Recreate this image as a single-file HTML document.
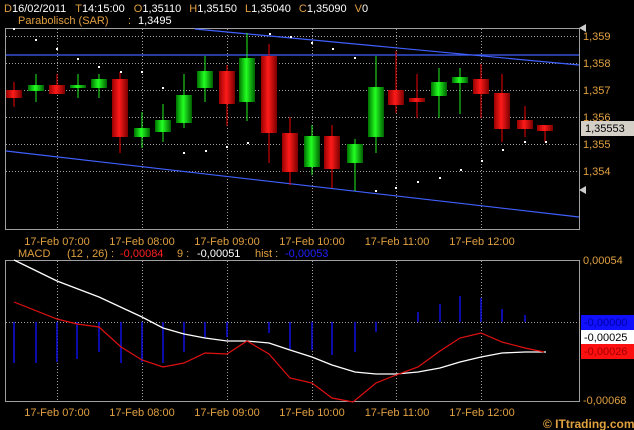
<!DOCTYPE html>
<html><head><style>
html,body{margin:0;padding:0;background:#000;width:634px;height:430px;overflow:hidden}
svg{display:block}
text{font-family:"Liberation Sans",sans-serif;font-size:11px}
.o{fill:#e0a040}.w{fill:#fff}
</style></head><body>
<svg width="634" height="430" viewBox="0 0 634 430" xmlns="http://www.w3.org/2000/svg">
<defs>
<linearGradient id="r" x1="0" x2="1" y1="0" y2="0"><stop offset="0" stop-color="#900"/><stop offset=".45" stop-color="#ff1a1a"/><stop offset="1" stop-color="#7a0000"/></linearGradient>
<linearGradient id="g" x1="0" x2="1" y1="0" y2="0"><stop offset="0" stop-color="#007000"/><stop offset=".45" stop-color="#22ff22"/><stop offset="1" stop-color="#006000"/></linearGradient>
</defs>
<text x="4" y="12"><tspan class="o">D</tspan><tspan class="w">16/02/2011</tspan><tspan class="o" dx="9">T</tspan><tspan class="w">14:15:00</tspan><tspan class="o" dx="9">O</tspan><tspan class="w">1,35110</tspan><tspan class="o" dx="8">H</tspan><tspan class="w">1,35150</tspan><tspan class="o" dx="8">L</tspan><tspan class="w">1,35040</tspan><tspan class="o" dx="8">C</tspan><tspan class="w">1,35090</tspan><tspan class="o" dx="8">V</tspan><tspan class="w">0</tspan></text>
<text x="18" y="24" class="o">Parabolisch (SAR)</text><text x="128" y="24" class="o">:</text><text x="138" y="24" class="w">1,3495</text>
<rect x="5.5" y="28.5" width="574" height="201" fill="none" stroke="#a0a0a0"/>
<g stroke="#a0a0a0" stroke-dasharray="1,2">
<line x1="6" x2="579" y1="36.5" y2="36.5"/><line x1="6" x2="579" y1="63.5" y2="63.5"/><line x1="6" x2="579" y1="90.5" y2="90.5"/><line x1="6" x2="579" y1="117.5" y2="117.5"/><line x1="6" x2="579" y1="144.5" y2="144.5"/><line x1="6" x2="579" y1="171.5" y2="171.5"/>
<line x1="57.5" x2="57.5" y1="29" y2="229"/><line x1="142.5" x2="142.5" y1="29" y2="229"/><line x1="227.5" x2="227.5" y1="29" y2="229"/><line x1="312.5" x2="312.5" y1="29" y2="229"/><line x1="396.5" x2="396.5" y1="29" y2="229"/><line x1="481.5" x2="481.5" y1="29" y2="229"/>
</g>
<g class="o">
<text x="583" y="40">1,359</text><text x="583" y="67">1,358</text><text x="583" y="94">1,357</text><text x="583" y="121">1,356</text><text x="583" y="148">1,355</text><text x="583" y="175">1,354</text>
</g>
<polygon points="579,28 586,24 586,32" fill="#ccc"/><polygon points="579,190 586,186 586,194" fill="#ccc"/>
<rect x="581" y="121" width="53" height="15" fill="#d4d0c8"/><text x="585" y="132" fill="#000">1,35553</text>
<g stroke="#4060ff" stroke-width="1.2">
<line x1="6" y1="55" x2="579" y2="55"/><line x1="195" y1="29" x2="579" y2="65"/><line x1="6" y1="151" x2="579" y2="217"/>
</g>
<g stroke-width="1">
<line x1="14" x2="14" y1="82" y2="107" stroke="#e00"/><rect x="6" y="90" width="16" height="8" fill="url(#r)"/>
<line x1="36" x2="36" y1="74" y2="102" stroke="#2e2"/><rect x="28" y="85" width="16" height="6" fill="url(#g)"/>
<line x1="57" x2="57" y1="74" y2="94" stroke="#e00"/><rect x="49" y="85" width="16" height="9" fill="url(#r)"/>
<line x1="78" x2="78" y1="74" y2="98" stroke="#2e2"/><rect x="70" y="85" width="16" height="3" fill="url(#g)"/>
<line x1="99" x2="99" y1="74" y2="98" stroke="#2e2"/><rect x="91" y="79" width="16" height="9" fill="url(#g)"/>
<line x1="120" x2="120" y1="72" y2="153" stroke="#e00"/><rect x="112" y="79" width="16" height="58" fill="url(#r)"/>
<line x1="142" x2="142" y1="112" y2="148" stroke="#2e2"/><rect x="134" y="128" width="16" height="9" fill="url(#g)"/>
<line x1="163" x2="163" y1="104" y2="142" stroke="#2e2"/><rect x="155" y="120" width="16" height="12" fill="url(#g)"/>
<line x1="184" x2="184" y1="74" y2="128" stroke="#2e2"/><rect x="176" y="95" width="16" height="28" fill="url(#g)"/>
<line x1="205" x2="205" y1="56" y2="102" stroke="#2e2"/><rect x="197" y="71" width="16" height="17" fill="url(#g)"/>
<line x1="227" x2="227" y1="65" y2="126" stroke="#e00"/><rect x="219" y="71" width="16" height="33" fill="url(#r)"/>
<line x1="247" x2="247" y1="33" y2="121" stroke="#2e2"/><rect x="239" y="58" width="16" height="44" fill="url(#g)"/>
<line x1="269" x2="269" y1="44" y2="163" stroke="#e00"/><rect x="261" y="56" width="16" height="77" fill="url(#r)"/>
<line x1="290" x2="290" y1="117" y2="185" stroke="#e00"/><rect x="282" y="133" width="16" height="39" fill="url(#r)"/>
<line x1="312" x2="312" y1="125" y2="175" stroke="#2e2"/><rect x="304" y="136" width="16" height="31" fill="url(#g)"/>
<line x1="332" x2="332" y1="125" y2="188" stroke="#e00"/><rect x="324" y="136" width="16" height="33" fill="url(#r)"/>
<line x1="355" x2="355" y1="139" y2="191" stroke="#2e2"/><rect x="347" y="144" width="16" height="19" fill="url(#g)"/>
<line x1="376" x2="376" y1="56" y2="153" stroke="#2e2"/><rect x="368" y="87" width="16" height="50" fill="url(#g)"/>
<line x1="396" x2="396" y1="51" y2="113" stroke="#e00"/><rect x="388" y="90" width="16" height="15" fill="url(#r)"/>
<line x1="417" x2="417" y1="74" y2="118" stroke="#e00"/><rect x="409" y="98" width="16" height="4" fill="url(#r)"/>
<line x1="439" x2="439" y1="68" y2="118" stroke="#2e2"/><rect x="431" y="82" width="16" height="14" fill="url(#g)"/>
<line x1="460" x2="460" y1="68" y2="114" stroke="#2e2"/><rect x="452" y="77" width="16" height="6" fill="url(#g)"/>
<line x1="481" x2="481" y1="64" y2="118" stroke="#e00"/><rect x="473" y="79" width="16" height="15" fill="url(#r)"/>
<line x1="502" x2="502" y1="74" y2="142" stroke="#e00"/><rect x="494" y="93" width="16" height="36" fill="url(#r)"/>
<line x1="525" x2="525" y1="106" y2="137" stroke="#e00"/><rect x="517" y="120" width="16" height="9" fill="url(#r)"/>
<line x1="545" x2="545" y1="125" y2="142" stroke="#e00"/><rect x="537" y="125" width="16" height="6" fill="url(#r)"/>
</g>
<g fill="#fff">
<rect x="13" y="28" width="2" height="2"/><rect x="35" y="39" width="2" height="2"/><rect x="56" y="48" width="2" height="2"/><rect x="77" y="58" width="2" height="2"/><rect x="98" y="66" width="2" height="2"/><rect x="120" y="71" width="2" height="2"/><rect x="141" y="71" width="2" height="2"/><rect x="162" y="87" width="2" height="2"/><rect x="183" y="152" width="2" height="2"/><rect x="205" y="150" width="2" height="2"/><rect x="226" y="146" width="2" height="2"/><rect x="247" y="142" width="2" height="2"/><rect x="269" y="33" width="2" height="2"/><rect x="290" y="36" width="2" height="2"/><rect x="311" y="42" width="2" height="2"/><rect x="332" y="48" width="2" height="2"/><rect x="354" y="57" width="2" height="2"/><rect x="375" y="190" width="2" height="2"/><rect x="395" y="187" width="2" height="2"/><rect x="417" y="181" width="2" height="2"/><rect x="439" y="177" width="2" height="2"/><rect x="460" y="169" width="2" height="2"/><rect x="481" y="160" width="2" height="2"/><rect x="502" y="149" width="2" height="2"/><rect x="524" y="141" width="2" height="2"/><rect x="545" y="141" width="2" height="2"/>
</g>
<g class="o" text-anchor="middle">
<text x="57" y="245">17-Feb 07:00</text><text x="142" y="245">17-Feb 08:00</text><text x="227" y="245">17-Feb 09:00</text><text x="312" y="245">17-Feb 10:00</text><text x="397" y="245">17-Feb 11:00</text><text x="482" y="245">17-Feb 12:00</text>
<text x="57" y="416">17-Feb 07:00</text><text x="142" y="416">17-Feb 08:00</text><text x="227" y="416">17-Feb 09:00</text><text x="312" y="416">17-Feb 10:00</text><text x="397" y="416">17-Feb 11:00</text><text x="482" y="416">17-Feb 12:00</text>
</g>
<text x="18" y="257" class="o">MACD</text><text x="67" y="257" class="o">(12 , 26) :</text><text x="120" y="257" fill="#ff2020">-0,00084</text><text x="177" y="257" class="o">9 :</text><text x="197" y="257" class="w">-0,00051</text><text x="255" y="257" class="o">hist :</text><text x="285" y="257" fill="#2020ff">-0,00053</text>
<rect x="5.5" y="260.5" width="574" height="141" fill="none" stroke="#a0a0a0"/>
<g stroke="#a0a0a0" stroke-dasharray="1,2">
<line x1="6" x2="579" y1="322.5" y2="322.5"/>
<line x1="57.5" x2="57.5" y1="261" y2="401"/><line x1="142.5" x2="142.5" y1="261" y2="401"/><line x1="227.5" x2="227.5" y1="261" y2="401"/><line x1="312.5" x2="312.5" y1="261" y2="401"/><line x1="396.5" x2="396.5" y1="261" y2="401"/><line x1="481.5" x2="481.5" y1="261" y2="401"/>
</g>
<g stroke="#1010e0" stroke-width="1.5">
<line x1="14" x2="14" y1="322" y2="363"/><line x1="36" x2="36" y1="322" y2="363"/><line x1="57" x2="57" y1="322" y2="362"/><line x1="77" x2="77" y1="322" y2="359"/><line x1="99" x2="99" y1="322" y2="352"/><line x1="121" x2="121" y1="322" y2="363"/><line x1="142" x2="142" y1="322" y2="362"/><line x1="163" x2="163" y1="322" y2="363"/><line x1="184" x2="184" y1="322" y2="352"/><line x1="205" x2="205" y1="322" y2="338"/><line x1="227" x2="227" y1="322" y2="337"/><line x1="269" x2="269" y1="322" y2="333"/><line x1="290" x2="290" y1="322" y2="349"/><line x1="312" x2="312" y1="322" y2="350"/><line x1="332" x2="332" y1="322" y2="355"/><line x1="355" x2="355" y1="322" y2="352"/><line x1="376" x2="376" y1="322" y2="332"/><line x1="418" x2="418" y1="322" y2="312"/><line x1="440" x2="440" y1="322" y2="304"/><line x1="460" x2="460" y1="322" y2="296"/><line x1="481" x2="481" y1="322" y2="298"/><line x1="502" x2="502" y1="322" y2="309"/><line x1="525" x2="525" y1="322" y2="315"/>
</g>
<polyline fill="none" stroke="#fff" stroke-width="1.3" points="14,260 57,281 99,297 142,317 163,328 184,334 205,338 227,341 247,341 269,343 290,350 312,357 332,365 355,372 376,374 396,374 418,372 440,368 460,362 481,357 502,353 525,352 546,352"/>
<polyline fill="none" stroke="#e01010" stroke-width="1.2" points="14,302 57,319 77,324 99,327 121,347 142,360 163,367 184,363 205,353 227,354 247,341 269,354 290,378 312,383 332,398 353,402 376,383 396,375 418,367 440,351 460,338 481,333 502,342 525,348 544,352"/>
<g class="o"><text x="583" y="264">0,00054</text><text x="583" y="404">-0,00068</text></g>
<rect x="581" y="315" width="53" height="15" fill="#1010ff"/><text x="584" y="326" fill="#0000a0">-0,00000</text>
<rect x="581" y="330" width="53" height="14" fill="#fff"/><text x="584" y="341" fill="#000">-0,00025</text>
<rect x="581" y="344" width="53" height="15" fill="#ff1010"/><text x="584" y="355" fill="#a00000">-0,00026</text>
<text x="543" y="428" class="o" style="font-weight:bold;font-size:12px">© ITtrading.com</text>
</svg>
</body></html>
